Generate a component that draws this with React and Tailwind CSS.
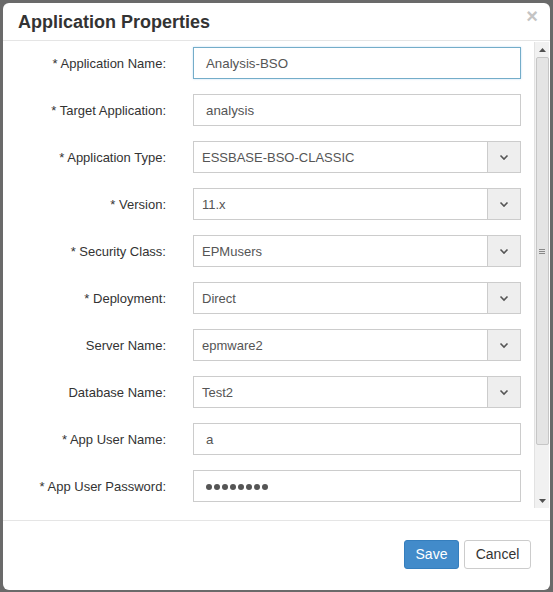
import React from "react";

const font = { fontFamily: '"Liberation Sans", Arial, sans-serif' };

function Chevron() {
  return (
    <svg width="10" height="7" viewBox="0 0 10 7">
      <path d="M1.5 1.5 L5 5 L8.5 1.5" fill="none" stroke="#555" strokeWidth="1.6" />
    </svg>
  );
}

function TextField({ value, focus }) {
  return (
    <div
      className={
        "h-[32px] w-[328px] border bg-white flex items-center pl-[12px] pt-[2px] text-[13.3px] text-[#555] " +
        (focus ? "border-[#74adc9] shadow-[0_0_2px_rgba(102,175,233,0.4)]" : "border-[#ccc]")
      }
    >
      {value}
    </div>
  );
}

function SelectField({ value }) {
  return (
    <div className="h-[32px] w-[328px] border border-[#ccc] bg-white flex items-stretch text-[13px] text-[#555]">
      <div className="flex-1 flex items-center pl-[8px] pt-[2px]">{value}</div>
      <div className="w-[33px] bg-[#eee] border-l border-[#ccc] flex items-center justify-center">
        <Chevron />
      </div>
    </div>
  );
}

const rows = [
  ["* Application Name:", "text", "Analysis-BSO", true],
  ["* Target Application:", "text", "analysis"],
  ["* Application Type:", "select", "ESSBASE-BSO-CLASSIC"],
  ["* Version:", "select", "11.x"],
  ["* Security Class:", "select", "EPMusers"],
  ["* Deployment:", "select", "Direct"],
  ["Server Name:", "select", "epmware2"],
  ["Database Name:", "select", "Test2"],
  ["* App User Name:", "text", "a"],
  ["* App User Password:", "password", ""],
];

export default function App() {
  return (
    <div className="w-[553px] h-[592px] bg-[#6a6a6a] pt-[3px] pl-[3px]" style={font}>
      <div className="w-[547px] h-[587px] bg-white rounded-[6px] flex flex-col overflow-hidden">
        <div className="h-[38px] border-b border-[#e5e5e5] flex items-center justify-between pl-[15px] pr-[12px]">
          <div className="text-[18px] font-bold text-[#333] pt-[1px]">Application Properties</div>
          <div className="text-[20px] font-bold text-[#c4c4c4] leading-none -mt-[12px]">×</div>
        </div>
        <div className="h-[479px] flex">
          <div className="flex-1 flex flex-col gap-[15px] pt-[6px]">
            {rows.map(([label, type, value, focus]) => (
              <div key={label} className="flex items-center">
                <div className="w-[163px] text-right text-[13px] text-[#333] pt-[2px]">{label}</div>
                <div className="ml-[27px]">
                  {type === "select" ? (
                    <SelectField value={value} />
                  ) : type === "password" ? (
                    <div className="h-[32px] w-[328px] border border-[#ccc] bg-white flex items-center pl-[12px] pt-[1px] gap-[2px]">
                      {Array.from({ length: 8 }).map((_, i) => (
                        <span key={i} className="w-[6px] h-[6px] rounded-full bg-[#555]" />
                      ))}
                    </div>
                  ) : (
                    <TextField value={value} focus={focus} />
                  )}
                </div>
              </div>
            ))}
          </div>
          <div className="w-[15px] mr-[1px] mt-[1px] h-[466px] bg-[#f1f1f1] border-l border-[#e2e2e2] flex flex-col items-center">
            <div className="h-[15px] flex items-center justify-center">
              <svg width="7" height="4" viewBox="0 0 7 4"><path d="M0 4 L3.5 0 L7 4 Z" fill="#505050" /></svg>
            </div>
            <div className="w-[13px] h-[388px] bg-[#e4e4e4] border border-[#c6c6c6] rounded-[2px] flex items-center justify-center">
              <div className="flex flex-col gap-[1px]">
                <div className="w-[6px] h-[1px] bg-[#888]" />
                <div className="w-[6px] h-[1px] bg-[#888]" />
                <div className="w-[6px] h-[1px] bg-[#888]" />
              </div>
            </div>
            <div className="flex-1" />
            <div className="h-[15px] flex items-center justify-center">
              <svg width="7" height="4" viewBox="0 0 7 4"><path d="M0 0 L3.5 4 L7 0 Z" fill="#505050" /></svg>
            </div>
          </div>
        </div>
        <div className="flex-1 border-t border-[#e5e5e5] flex items-start justify-end pt-[19px] pr-[19px] gap-[5px]">
          <div className="h-[29px] w-[55px] bg-[#428bca] border border-[#357ebd] rounded-[3px] text-white text-[14px] flex items-center justify-center">
            Save
          </div>
          <div className="h-[29px] w-[67px] bg-white border border-[#ccc] rounded-[3px] text-[#333] text-[14px] flex items-center justify-center">
            Cancel
          </div>
        </div>
      </div>
    </div>
  );
}
